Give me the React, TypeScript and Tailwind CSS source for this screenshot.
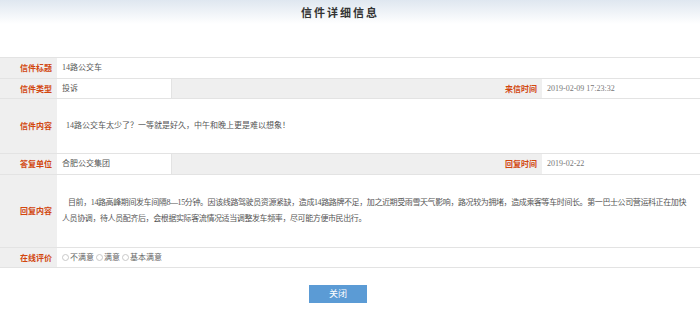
const labelCls =
  "flex items-center justify-end pr-[5px] bg-[#efefef] text-[8px] font-bold text-[#d2470f] font-['Noto_Sans_CJK_SC',sans-serif]";
const valueCls =
  "flex items-center pl-[5px] text-[8px] text-[#555] font-['Liberation_Serif','Noto_Sans_CJK_SC',serif]";

function Radio({ label }: { label: string }) {
  return (
    <label className="flex items-center">
      <span className="inline-block h-[7px] w-[7px] rounded-full border border-[#c8c8c8] bg-white" />
      <span className="ml-[1px]">{label}</span>
    </label>
  );
}

export default function App() {
  return (
    <div className="h-[309px] w-[700px] bg-white">
      <div className="h-[24px] bg-gradient-to-b from-[#dfe7f0] to-white flex items-center justify-center pr-[20px]">
        <h1 className="text-[11px] font-bold tracking-[2px] text-[#333] font-['Noto_Sans_CJK_SC',sans-serif]">
          信件详细信息
        </h1>
      </div>

      <div className="mt-[33px] grid grid-cols-[57px_115px_370px_158px] border-t border-[#e3e3e3]">
        {/* 信件标题 */}
        <div className={`${labelCls} h-[21px] border-b border-[#e3e3e3]`}>信件标题</div>
        <div className={`${valueCls} col-span-3 h-[21px] border-b border-[#e3e3e3]`}>14路公交车</div>

        {/* 信件类型 / 来信时间 */}
        <div className={`${labelCls} h-[20px] border-b border-[#e3e3e3]`}>信件类型</div>
        <div className={`${valueCls} h-[20px] border-b border-r border-[#e3e3e3]`}>投诉</div>
        <div className={`${labelCls} h-[20px] border-b border-[#e3e3e3] bg-[#ececec] pr-[3px] text-[#d93a12]`}>来信时间</div>
        <div className={`${valueCls} h-[20px] border-b border-[#e3e3e3] text-[#777]`}>2019-02-09 17:23:32</div>

        {/* 信件内容 */}
        <div className={`${labelCls} h-[55px] border-b border-[#e3e3e3]`}>信件内容</div>
        <div className={`${valueCls} col-span-3 h-[55px] border-b border-[#e3e3e3] pl-[9px]`}>
          14路公交车太少了？一等就是好久，中午和晚上更是难以想象！
        </div>

        {/* 答复单位 / 回复时间 */}
        <div className={`${labelCls} h-[21px] border-b border-[#e3e3e3]`}>答复单位</div>
        <div className={`${valueCls} h-[21px] border-b border-r border-[#e3e3e3]`}>合肥公交集团</div>
        <div className={`${labelCls} h-[21px] border-b border-[#e3e3e3] bg-[#ececec] pr-[3px] text-[#d93a12]`}>回复时间</div>
        <div className={`${valueCls} h-[21px] border-b border-[#e3e3e3] text-[#777]`}>2019-02-22</div>

        {/* 回复内容 */}
        <div className={`${labelCls} h-[73px] border-b border-[#e3e3e3]`}>回复内容</div>
        <div className={`${valueCls} col-span-3 h-[73px] border-b border-[#e3e3e3] pr-[12px]`}>
          <p className="indent-[6px] leading-[16px] tracking-[-0.4px]">
            目前，14路高峰期间发车间隔8—15分钟。因该线路驾驶员资源紧缺，造成14路路牌不足，加之近期受雨雪天气影响，路况较为拥堵，造成乘客等车时间长。第一巴士公司营运科正在加快人员协调，待人员配齐后，会根据实际客流情况适当调整发车频率，尽可能方便市民出行。
          </p>
        </div>

        {/* 在线评价 */}
        <div className={`${labelCls} h-[20px] border-b border-[#e3e3e3]`}>在线评价</div>
        <div className={`${valueCls} col-span-3 h-[20px] border-b border-[#e3e3e3] gap-[2px] text-[#666]`}>
          <Radio label="不满意" />
          <Radio label="满意" />
          <Radio label="基本满意" />
        </div>
      </div>

      <div className="mt-[17px] flex justify-center pr-[24px]">
        <button className="h-[18px] w-[58px] bg-[#5b9bd5] text-[9px] text-white font-['Noto_Sans_CJK_SC',sans-serif]">
          关闭
        </button>
      </div>
    </div>
  );
}
